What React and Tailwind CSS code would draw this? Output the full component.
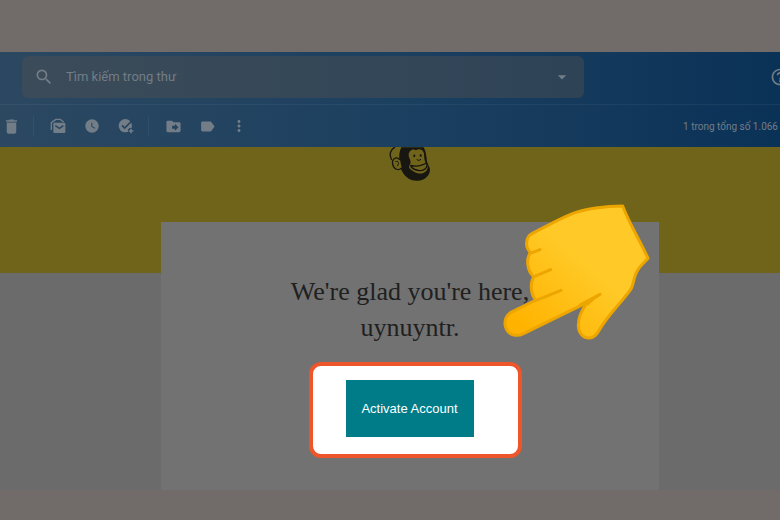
import { MdSearch, MdArrowDropDown, MdHelpOutline, MdDelete, MdWatchLater, MdDriveFileMove, MdLabel, MdMoreVert } from "react-icons/md";

const iconButton = "flex size-5 shrink-0 items-center justify-center";

function MarkUnreadIcon() {
  return (
    <svg viewBox="0 0 48 48" className="size-4" fill="none">
      <path d="M4 36V14L18 4H30L41 12" stroke="currentColor" strokeWidth="4" strokeLinejoin="round" />
      <path d="M13 14H43Q46 14 46 17V42Q46 45 43 45H13Q10 45 10 42V17Q10 14 13 14Z" fill="currentColor" />
      <path d="M16 23L28 31L40 23" stroke="#28455f" strokeWidth="4" />
    </svg>
  );
}

function AddTaskIcon() {
  return (
    <svg viewBox="0 0 48 48" className="size-4" fill="none">
      <circle cx="22" cy="23" r="20" fill="currentColor" />
      <path d="M12 22L20 30L44 6" stroke="#26445f" strokeWidth="5" />
      <path d="M30 39H48M39 30V48" stroke="#26445f" strokeWidth="12" />
      <path d="M32 39H46M39 32V46" stroke="currentColor" strokeWidth="5" />
    </svg>
  );
}

function Freddie() {
  return (
    <svg viewBox="24 36 132 104" className="h-[35px] w-11" role="img" aria-label="Mailchimp">
      <path d="M64 36C58 48 57 60 58 72C60 86 60 98 67 110C76 128 94 138 113 137C134 136 150 121 150 103C149 93 143 88 141 78C139 60 137 46 131 36Z" fill="#171610" />
      <path d="M86 62C85 47 97 39 108 45C117 39 130 43 132 55C133 65 132 75 137 82C144 88 145 98 140 106C132 117 115 118 102 110C93 104 83 99 89 89C96 80 88 72 86 62Z" fill="#70641a" />
      <path d="M35 74C26 58 32 42 45 36" fill="none" stroke="#171610" strokeWidth="4" />
      <path d="M60 74C48 61 35 72 38 87C41 103 56 108 65 98" fill="#70641a" stroke="#171610" strokeWidth="4" />
      <path d="M46 80C56 75 58 84 52 93" fill="none" stroke="#171610" strokeWidth="3" />
      <path d="M110 73L117 76L123 72" fill="none" stroke="#171610" strokeWidth="3" />
      <path d="M92 91C110 95 127 92 139 83C145 98 133 108 116 106C103 104 94 99 92 91Z" fill="#70641a" stroke="#171610" strokeWidth="4" strokeLinejoin="round" />
      <ellipse cx="103" cy="62" rx="3" ry="4" fill="#171610" />
      <ellipse cx="122" cy="61" rx="3" ry="4" fill="#171610" />
    </svg>
  );
}

function PointingHand({ className }) {
  return (
    <svg viewBox="0 0 510 465" className={className} aria-hidden="true">
      <defs>
        <linearGradient id="skin" x1="90" y1="390" x2="270" y2="180" gradientUnits="userSpaceOnUse">
          <stop offset="0" stopColor="#ffb300" />
          <stop offset="1" stopColor="#ffca28" />
        </linearGradient>
      </defs>
      <path
        d="M398 33C350 33 283 41 242 58C203 74 164 96 126 116C105 127 105 159 122 172C107 190 111 230 132 245C119 262 122 300 138 315L67 350C46 360 40 384 49 402C59 422 81 426 102 415L292 322C275 345 264 371 265 393C266 417 282 431 300 429C313 428 321 418 328 405C353 360 399 318 424 280C432 264 431 243 443 226C450 213 462 204 474 190C453 143 418 86 398 33Z"
        fill="url(#skin)"
        stroke="#eda600"
        strokeWidth="9"
        strokeLinejoin="round"
      />
      <path d="M121 175L150 164M132 245L182 224M137 317L213 286M270 330L330 298Q309 311 294 326" fill="none" stroke="#eda600" strokeWidth="9" strokeLinecap="round" strokeLinejoin="round" />
    </svg>
  );
}

function MailHeader() {
  return (
    <header className="overflow-hidden bg-linear-to-r from-[#2c4861] via-[#1c4060] to-[#0a3257] text-[#727d87]" style={{ fontFamily: "Roboto, sans-serif" }}>
      <div className="flex h-[53px] items-start justify-between border-b border-white/5 pt-1 pl-[22px]">
        <div className="flex h-[42px] w-[562px] items-center rounded-md bg-[#505050]/45 px-3">
          <button aria-label="Tìm kiếm" className={iconButton}><MdSearch size={20} /></button>
          <input aria-label="Tìm kiếm trong thư" placeholder="Tìm kiếm trong thư" className="ml-3 min-w-0 flex-1 bg-transparent text-[13px] outline-none placeholder:text-[#727d87]" />
          <button aria-label="Tùy chọn tìm kiếm" className={iconButton}><MdArrowDropDown size={20} /></button>
        </div>
        <button aria-label="Trợ giúp" className="-mr-2.5 flex h-[42px] shrink-0 items-center"><MdHelpOutline size={20} /></button>
      </div>
      <div className="flex h-[42px] items-center">
        <button aria-label="Xóa" className={iconButton + " ml-px"}><MdDelete size={19} /></button>
        <span className="mx-3 h-5 w-px bg-white/5" />
        <div className="ml-0.5 flex gap-3.5">
          <button aria-label="Đánh dấu là chưa đọc" className={iconButton}><MarkUnreadIcon /></button>
          <button aria-label="Tạm ẩn" className={iconButton}><MdWatchLater size={16} /></button>
          <button aria-label="Thêm vào việc cần làm" className={iconButton}><AddTaskIcon /></button>
        </div>
        <span className="mx-3 h-5 w-px bg-white/5" />
        <div className="ml-0.5 flex gap-3">
          <button aria-label="Di chuyển" className={iconButton}><MdDriveFileMove size={17} /></button>
          <button aria-label="Nhãn" className={iconButton + " ml-0.5"}><MdLabel size={17} /></button>
          <button aria-label="Thêm" className={iconButton}><MdMoreVert size={18} /></button>
        </div>
        <span className="mr-0.5 ml-auto text-[10px]">1 trong tổng số 1.066</span>
      </div>
    </header>
  );
}

export default function App() {
  return (
    <div className="flex min-h-screen flex-col overflow-hidden bg-[#716c69] pt-[52px] pb-[30px]">
      <MailHeader />
      <main className="flex flex-1 flex-col bg-[#6b6b6b]">
        <div className="flex h-[126px] justify-center bg-[#70641a] pl-10">
          <Freddie />
        </div>
        <section className="relative -mt-[51px] mr-[121px] ml-[161px] flex flex-1 flex-col items-center bg-[#727272] pt-[52px] pb-8">
          <h1 className="text-center text-[26px] leading-9 text-[#202020]" style={{ fontFamily: "'Liberation Serif', serif" }}>
            We're glad you're here,
            <br />
            uynuyntr.
          </h1>
          <div className="mt-4 ml-2.5 rounded-xl border-4 border-[#ed562b] bg-white pt-3.5 pr-11 pb-[17px] pl-[33px]">
            <button className="h-[57px] w-32 bg-[#007c89] text-[13px] text-white" style={{ fontFamily: "'Liberation Sans', sans-serif" }}>
              Activate Account
            </button>
          </div>
          <PointingHand className="absolute -top-[27px] left-[329px] w-[170px]" />
        </section>
      </main>
    </div>
  );
}
